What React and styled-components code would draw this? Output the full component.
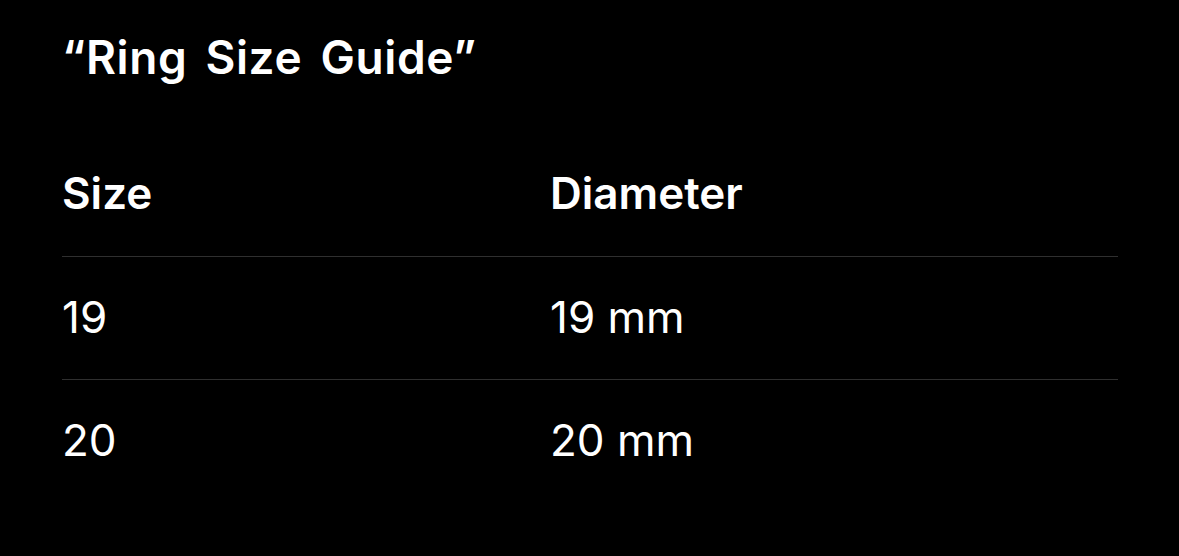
import React from 'react';
import styled, { createGlobalStyle } from 'styled-components';

const GlobalStyle = createGlobalStyle`
  html, body {
    margin: 0;
    padding: 0;
    background: #000;
  }
  body {
    font-family: Inter, "Noto Sans", "Liberation Sans", sans-serif;
    color: #fff;
    -webkit-font-smoothing: antialiased;
  }
`;

const Page = styled.main`
  min-height: 556px;
  padding: 31px 61px 0 62px;
  box-sizing: border-box;
  background: #000;
`;

const Title = styled.h1`
  margin: 0 0 83px;
  font-size: 46px;
  line-height: 53px;
  font-weight: 600;
  letter-spacing: 0.6px;
  word-spacing: 6px;
`;

const Table = styled.div`
  display: flex;
  flex-direction: column;
`;

const Row = styled.div`
  display: grid;
  grid-template-columns: 488px 1fr;
  padding: ${({ $head }) => ($head ? '0 0 37px' : '34px 0 36px')};
  border-bottom: ${({ $last }) => ($last ? 'none' : '1px solid #2f2f2f')};
`;

const Cell = styled.div`
  font-size: 44px;
  line-height: 52px;
  font-weight: ${({ $head }) => ($head ? 600 : 400)};
`;

const rows = [
  { size: '19', diameter: '19 mm' },
  { size: '20', diameter: '20 mm' },
];

export default function App() {
  return (
    <>
      <GlobalStyle />
      <Page>
        <Title>“Ring Size Guide”</Title>
        <Table>
          <Row $head>
            <Cell $head>Size</Cell>
            <Cell $head>Diameter</Cell>
          </Row>
          {rows.map((r, i) => (
            <Row key={r.size} $last={i === rows.length - 1}>
              <Cell>{r.size}</Cell>
              <Cell>{r.diameter}</Cell>
            </Row>
          ))}
        </Table>
      </Page>
    </>
  );
}
